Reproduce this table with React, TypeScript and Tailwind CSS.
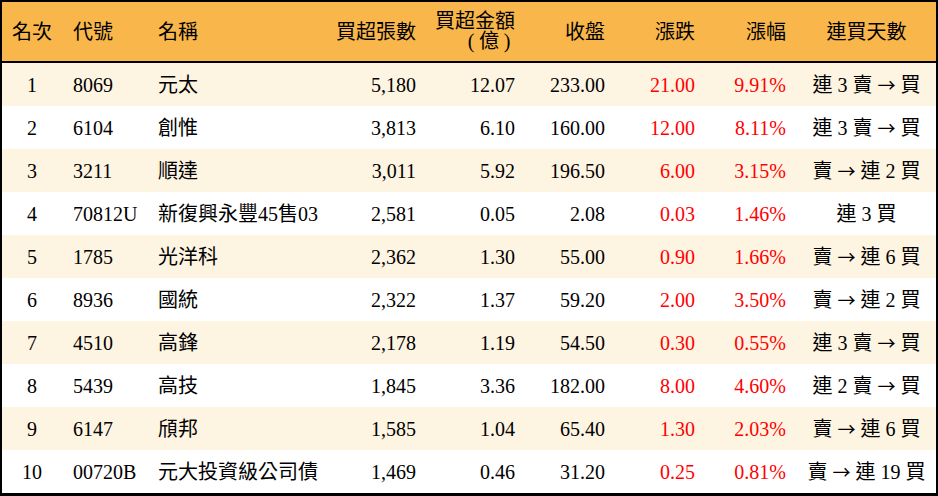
const rows = [
  { rank: 1, code: '8069', name: '元太', lots: '5,180', amt: '12.07', close: '233.00', chg: '21.00', pct: '9.91%', streak: '連 3 賣 → 買' },
  { rank: 2, code: '6104', name: '創惟', lots: '3,813', amt: '6.10', close: '160.00', chg: '12.00', pct: '8.11%', streak: '連 3 賣 → 買' },
  { rank: 3, code: '3211', name: '順達', lots: '3,011', amt: '5.92', close: '196.50', chg: '6.00', pct: '3.15%', streak: '賣 → 連 2 買' },
  { rank: 4, code: '70812U', name: '新復興永豐45售03', lots: '2,581', amt: '0.05', close: '2.08', chg: '0.03', pct: '1.46%', streak: '連 3 買' },
  { rank: 5, code: '1785', name: '光洋科', lots: '2,362', amt: '1.30', close: '55.00', chg: '0.90', pct: '1.66%', streak: '賣 → 連 6 買' },
  { rank: 6, code: '8936', name: '國統', lots: '2,322', amt: '1.37', close: '59.20', chg: '2.00', pct: '3.50%', streak: '賣 → 連 2 買' },
  { rank: 7, code: '4510', name: '高鋒', lots: '2,178', amt: '1.19', close: '54.50', chg: '0.30', pct: '0.55%', streak: '連 3 賣 → 買' },
  { rank: 8, code: '5439', name: '高技', lots: '1,845', amt: '3.36', close: '182.00', chg: '8.00', pct: '4.60%', streak: '連 2 賣 → 買' },
  { rank: 9, code: '6147', name: '頎邦', lots: '1,585', amt: '1.04', close: '65.40', chg: '1.30', pct: '2.03%', streak: '賣 → 連 6 買' },
  { rank: 10, code: '00720B', name: '元大投資級公司債', lots: '1,469', amt: '0.46', close: '31.20', chg: '0.25', pct: '0.81%', streak: '賣 → 連 19 買' },
]

const cols = 'grid grid-cols-[60px_85px_183px_97px_99px_90px_90px_91px_139px]'

// the arrow is drawn from the CJK font so it gets its full-width shape
function Streak({ text }: { text: string }) {
  const parts = text.split('→')
  if (parts.length === 1) return <>{text}</>
  return (
    <>
      {parts[0]}
      <span className="font-['Noto_Sans_CJK_TC'] text-[18px]">→</span>
      {parts[1]}
    </>
  )
}

export default function App() {
  return (
    <div
      className="w-[938px] h-[496px] border-x-2 border-t-2 border-b-[3px] border-black bg-white text-[20px] text-black"
      style={{ fontFamily: '"Liberation Serif", "Noto Sans CJK TC", serif' }}
    >
      {/* header */}
      <div className={`${cols} h-[61px] items-center bg-[#f9b74b] border-b-2 border-black leading-[20px]`}>
        <div className="text-center">名次</div>
        <div className="pl-[11px]">代號</div>
        <div className="pl-[11px]">名稱</div>
        <div className="pr-[11px] text-right">買超張數</div>
        <div className="pr-[11px] text-right -mt-[2px]">
          <div>買超金額</div>
          <div className="flex justify-end">
            <span className="w-[16px] text-center">(</span>
            <span className="w-[20px] text-center">億</span>
            <span className="w-[16px] text-center">)</span>
          </div>
        </div>
        <div className="pr-[11px] text-right">收盤</div>
        <div className="pr-[11px] text-right">漲跌</div>
        <div className="pr-[11px] text-right">漲幅</div>
        <div className="text-center">連買天數</div>
      </div>

      {rows.map((r, i) => (
        <div
          key={r.rank}
          className={`${cols} h-[43px] items-center ${i % 2 === 0 ? 'bg-[#fef4e2]' : 'bg-white'}`}
        >
          <div className="text-center">{r.rank}</div>
          <div className="pl-[11px]">{r.code}</div>
          <div className="pl-[11px] whitespace-nowrap">{r.name}</div>
          <div className="pr-[11px] text-right">{r.lots}</div>
          <div className="pr-[11px] text-right">{r.amt}</div>
          <div className="pr-[11px] text-right">{r.close}</div>
          <div className="pr-[11px] text-right text-[#ff0000]">{r.chg}</div>
          <div className="pr-[11px] text-right text-[#ff0000]">{r.pct}</div>
          <div className="text-center whitespace-nowrap">
            <Streak text={r.streak} />
          </div>
        </div>
      ))}
    </div>
  )
}
